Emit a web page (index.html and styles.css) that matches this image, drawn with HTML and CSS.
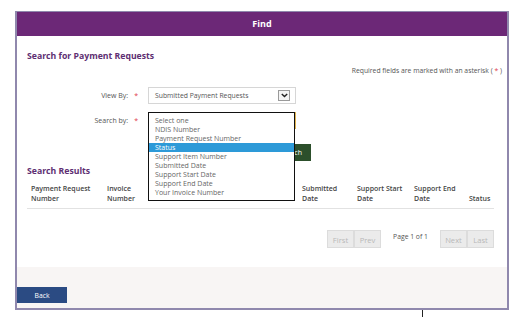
FILE: index.html
```html
<!DOCTYPE html>
<html>
<head>
<meta charset="utf-8">
<link rel="stylesheet" href="styles.css">
</head>
<body>
<div class="frame">
  <div class="header">Find</div>
  <div class="content">
    <h2 class="section-title">Search for Payment Requests</h2>
    <p class="required">Required fields are marked with an asterisk ( <span class="ast">*</span> )</p>
    <div class="form-row">
      <label class="label">View By:<span class="ast">*</span></label>
      <div class="select">
        <span class="select-text">Submitted Payment Requests</span>
        <span class="arrow"><svg width="7" height="5" viewBox="0 0 7 5"><path d="M0.8 0.9 L3.5 3.6 L6.2 0.9" fill="none" stroke="#222" stroke-width="1.4"/></svg></span>
      </div>
    </div>
    <div class="form-row row-search">
      <label class="label">Search by:<span class="ast">*</span></label>
      <div class="select select-open">
        <ul class="options">
          <li>Select one</li>
          <li>NDIS Number</li>
          <li>Payment Request Number</li>
          <li class="active">Status</li>
          <li>Support Item Number</li>
          <li>Submitted Date</li>
          <li>Support Start Date</li>
          <li>Support End Date</li>
          <li>Your Invoice Number</li>
        </ul>
      </div>
    </div>
    <div class="btn-row"><button class="btn-search">Search</button></div>
    <h2 class="section-title results-title">Search Results</h2>
    <div class="table-head">
      <div class="th">Payment Request<br>Number</div>
      <div class="th">Invoice<br>Number</div>
      <div class="th"></div>
      <div class="th"></div>
      <div class="th">Submitted<br>Date</div>
      <div class="th">Support Start<br>Date</div>
      <div class="th">Support End<br>Date</div>
      <div class="th"><br>Status</div>
    </div>
    <div class="pager">
      <span class="pbtn">First</span>
      <span class="pbtn">Prev</span>
      <span class="pinfo">Page 1 of 1</span>
      <span class="pbtn">Next</span>
      <span class="pbtn">Last</span>
    </div>
  </div>
  <div class="footer">
    <button class="btn-back">Back</button>
  </div>
</div>
<div class="tick"></div>
</body>
</html>
```
FILE: styles.css
```css
html, body {
  margin: 0;
  padding: 0;
  background: #ffffff;
}
body {
  font-family: "Open Sans", "Noto Sans", sans-serif;
  color: #444;
}
.frame {
  margin: 11px 0 0 15px;
  width: 490px;
  border: 2px solid #9088ad;
  border-top-width: 1px;
  background: #fff;
}
.header {
  height: 24px;
  line-height: 24px;
  background: #6c2877;
  color: #fff;
  font-weight: 700;
  font-size: 9px;
  text-align: center;
}
.content {
  padding: 0 5px 0 10px;
}
.section-title {
  margin: 13px 0 0;
  font-size: 8.7px;
  line-height: 14px;
  font-weight: 700;
  color: #5e2f72;
}
.required {
  margin: 2px 0 0;
  font-size: 6.8px;
  line-height: 12px;
  text-align: right;
  color: #555;
}
.ast {
  color: #e0394a;
}
.label .ast {
  margin-left: 6px;
}
.form-row {
  display: flex;
  align-items: center;
  margin-top: 10px;
  height: 17px;
}
.row-search {
  margin-top: 8px;
}
.label {
  width: 111px;
  text-align: right;
  font-size: 7px;
  color: #555;
  margin-right: 10px;
}
.select {
  position: relative;
  height: 15px;
  border: 1px solid #d6d6d6;
  display: flex;
  align-items: center;
  justify-content: space-between;
  padding: 0 5px 0 6px;
  box-sizing: content-box;
  width: 135px;
}
.select-text {
  font-size: 6.8px;
  color: #555;
}
.arrow {
  width: 10px;
  height: 9px;
  border: 1px solid #9a9a9a;
  background: #f4f4f4;
  display: flex;
  align-items: center;
  justify-content: center;
}
.select-open {
  border-color: #e2b450;
}
.options {
  position: absolute;
  left: -1px;
  top: -1px;
  width: 145px;
  margin: 0;
  padding: 3px 0 3px;
  list-style: none;
  background: #fff;
  border: 1px solid #111;
  z-index: 2;
}
.options li {
  height: 9px;
  line-height: 9px;
  font-size: 7px;
  color: #666;
  padding-left: 6px;
}
.options li.active {
  background: #2d9ad8;
  color: #fff;
}
.btn-row {
  margin-top: 15px;
  padding-left: 223px;
  height: 17px;
}
.btn-search {
  display: block;
  width: 61px;
  height: 17px;
  border: none;
  background: #2c4f2b;
  color: #fff;
  font-family: inherit;
  font-size: 7px;
  padding: 0;
  text-align: right;
  padding-right: 9px;
}
.results-title {
  margin-top: 3px;
}
.table-head {
  display: grid;
  grid-template-columns: 76px 58px 65px 72px 55px 57px 55px 29px;
  margin: 6px 8px 0 0;
  padding: 0 0 4px 4px;
  border-bottom: 1px solid #e2e2e2;
}
.th {
  font-size: 7px;
  line-height: 10px;
  font-weight: 600;
  color: #444;
}
.pager {
  display: flex;
  justify-content: flex-end;
  margin: 21px 8px 0 0;
  height: 18px;
}
.pbtn {
  width: 27px;
  height: 18px;
  line-height: 18px;
  background: #ebebeb;
  border: 0.5px solid #dcdcdc;
  box-sizing: border-box;
  text-align: center;
  font-size: 7.6px;
  color: #b8b8b8;
}
.pinfo {
  width: 59px;
  line-height: 14px;
  text-align: center;
  font-size: 6.8px;
  color: #555;
}
.footer {
  margin-top: 19px;
  height: 41px;
  background: #f8f5f4;
  padding-top: 20px;
  box-sizing: border-box;
}
.btn-back {
  display: block;
  width: 50px;
  height: 16px;
  border: none;
  background: #2b4b83;
  color: #fff;
  font-family: inherit;
  font-size: 6.8px;
  padding: 0;
}
.tick {
  margin-left: 422px;
  width: 1px;
  height: 7px;
  background: #222;
}
```
